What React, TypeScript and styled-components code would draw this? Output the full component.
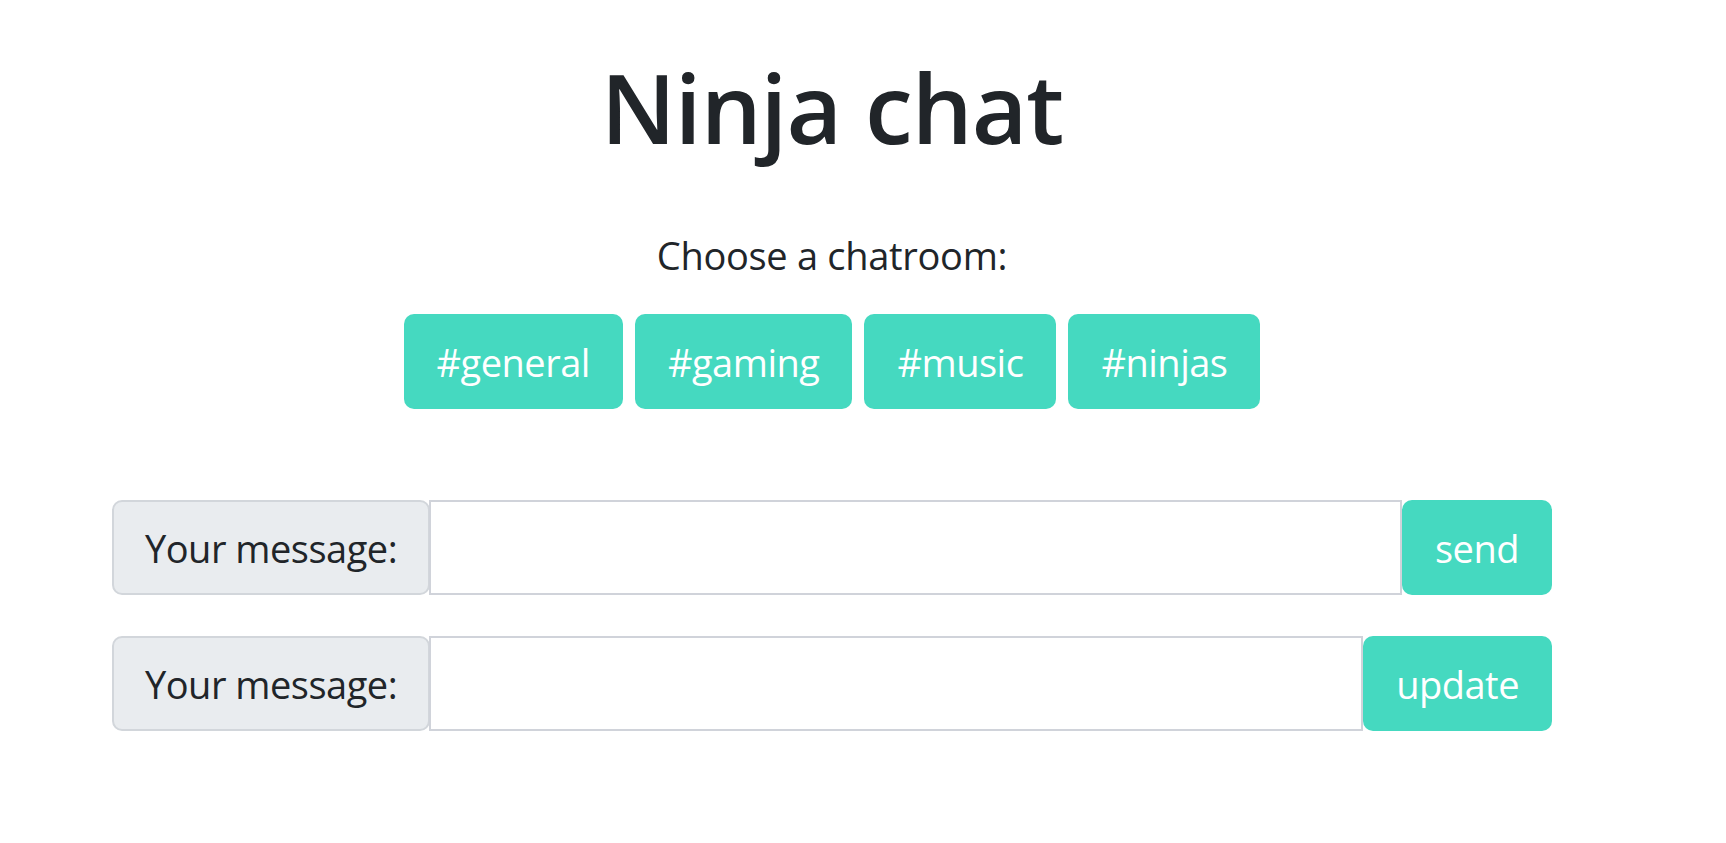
import React from "react";
import styled, { createGlobalStyle } from "styled-components";

const GlobalStyle = createGlobalStyle`
  html, body {
    margin: 0;
    padding: 0;
    background: #ffffff;
  }
  body {
    font-family: "Segoe UI", "Open Sans", "Noto Sans", sans-serif;
    color: #212529;
    -webkit-font-smoothing: antialiased;
  }
  * { box-sizing: border-box; }
`;

const Page = styled.div`
  width: 100%;
  padding: 48px 62px 0 0;
`;

const Container = styled.main`
  width: 1440px;
  margin: 0 auto;
  display: flex;
  flex-direction: column;
  align-items: center;
`;

const Title = styled.h1`
  margin: 0 0 59px;
  font-size: 96px;
  line-height: 118px;
  font-weight: 600;
  letter-spacing: -1px;
  color: #212529;
  text-align: center;
`;

const Lead = styled.p`
  margin: 0 0 29px;
  font-size: 38px;
  line-height: 60px;
  letter-spacing: -0.3px;
  text-align: center;
`;

const RoomList = styled.div`
  display: flex;
  gap: 12px;
  justify-content: center;
  margin-bottom: 91px;
`;

const TealButton = styled.button`
  height: 95px;
  padding: 0 33px;
  border: none;
  border-radius: 10px;
  background: #45d9c0;
  color: #ffffff;
  font-family: inherit;
  font-size: 38px;
  letter-spacing: -0.5px;
  line-height: 60px;
  cursor: pointer;
  display: flex;
  align-items: center;
  justify-content: center;
`;

const Form = styled.div`
  width: 100%;
  display: flex;
  flex-direction: column;
  gap: 41px;
`;

const InputGroup = styled.div`
  display: flex;
  align-items: stretch;
  height: 95px;
`;

const Label = styled.span`
  display: flex;
  align-items: center;
  padding: 0 31px;
  background: #e9ecef;
  border: 2px solid #d2d6db;
  border-radius: 10px;
  font-size: 38px;
  letter-spacing: -0.5px;
  color: #212529;
  white-space: nowrap;
`;

const TextInput = styled.input`
  flex: 1;
  min-width: 0;
  border: 2px solid #d0d3da;
  border-radius: 0;
  background: #ffffff;
  font-family: inherit;
  font-size: 38px;
  padding: 0 24px;
  outline: none;
  margin-left: -1px;
`;

const ActionButton = styled(TealButton)`
  height: 100%;
  padding: 0 33px;
`;

export default function App() {
  const rooms = ["#general", "#gaming", "#music", "#ninjas"];
  return (
    <>
      <GlobalStyle />
      <Page>
        <Container>
          <Title>Ninja chat</Title>
          <Lead>Choose a chatroom:</Lead>
          <RoomList>
            {rooms.map((r) => (
              <TealButton key={r}>{r}</TealButton>
            ))}
          </RoomList>
          <Form>
            <InputGroup>
              <Label>Your message:</Label>
              <TextInput type="text" />
              <ActionButton>send</ActionButton>
            </InputGroup>
            <InputGroup>
              <Label>Your message:</Label>
              <TextInput type="text" />
              <ActionButton>update</ActionButton>
            </InputGroup>
          </Form>
        </Container>
      </Page>
    </>
  );
}
